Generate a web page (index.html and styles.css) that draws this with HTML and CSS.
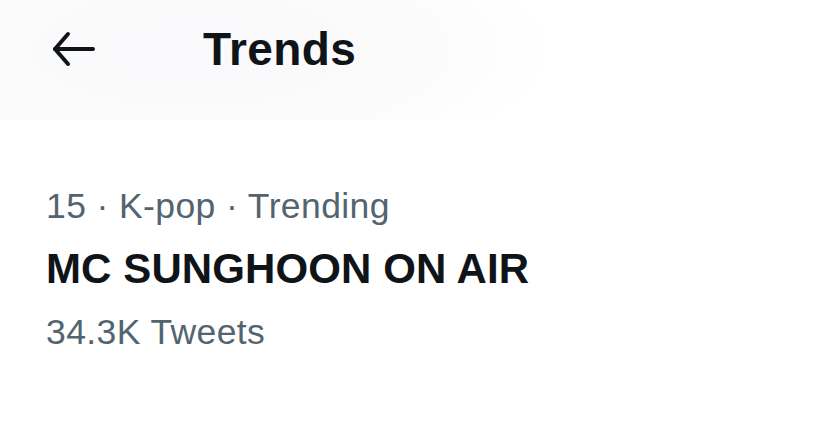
FILE: index.html
```html
<!DOCTYPE html>
<html lang="en">
<head>
    <meta charset="UTF-8" />
    <title>Trends</title>
    <link rel="stylesheet" href="styles.css">
</head>
<body>

<header class="top-bar">
    <button type="button" class="back-btn" aria-label="Back">
        <svg width="44" height="36" viewBox="0 0 44 36" fill="none" stroke="#0f1419" stroke-width="4" stroke-linecap="round" stroke-linejoin="round">
            <path d="M3 18H41" />
            <path d="M16 3L3 18L16 33" />
        </svg>
    </button>
    <h1>Trends</h1>
</header>

<section class="trend-item">
    <div class="trend-meta">15 · K-pop · Trending</div>
    <div class="trend-title">MC SUNGHOON ON AIR</div>
    <div class="trend-count">34.3K Tweets</div>
</section>

</body>
</html>
```

FILE: styles.css
```css
body {
    margin: 0;
    font-family: 'Liberation Sans', Arial, sans-serif;
    background-color: #ffffff;
    color: #0f1419;
}
.top-bar {
    height: 120px;
    box-sizing: border-box;
    padding: 21px 0 0 52px;
    display: flex;
    align-items: flex-start;
    background: radial-gradient(ellipse 360px 130px at 190px 50px, #f9f9fb 0%, #fbfbfc 65%, #ffffff 100%);
}
.back-btn {
    background: none;
    border: none;
    padding: 0;
    margin-top: 10px;
    width: 44px;
    height: 36px;
    cursor: pointer;
}
.back-btn svg {
    display: block;
}
.top-bar h1 {
    margin: 0 0 0 107px;
    font-size: 46px;
    line-height: 56px;
    letter-spacing: 0.4px;
    font-weight: bold;
}
.trend-item {
    padding: 54px 0 0 46px;
}
.trend-meta,
.trend-count {
    font-size: 35.5px;
    line-height: 64px;
    letter-spacing: 0.4px;
    color: #536471;
}
.trend-title {
    font-size: 42px;
    line-height: 62px;
    letter-spacing: 0.1px;
    font-weight: bold;
    color: #0f1419;
}
```
